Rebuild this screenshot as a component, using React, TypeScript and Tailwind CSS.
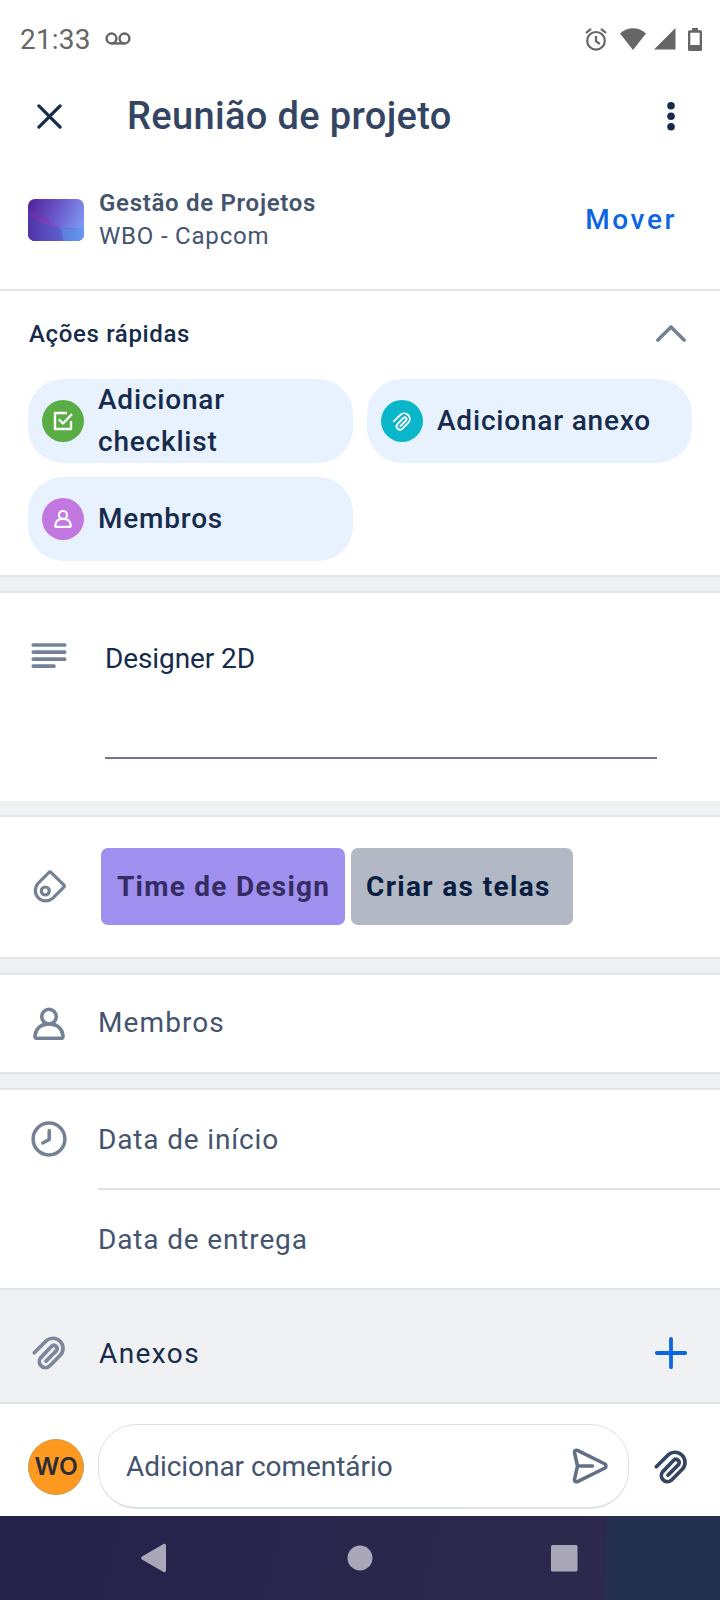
import type { ReactNode } from "react";

type IconProps = { className?: string; weight?: number };

function Paperclip({ className, weight = 3.7 }: IconProps) {
  return (
    <svg viewBox="0 0 36 36" fill="none" stroke="currentColor" strokeWidth={weight} strokeLinecap="round" strokeLinejoin="round" className={className}>
      <path d="M3.3 18.7 15.3 6.7A10.1 10.1 0 0 1 29.5 21L18.4 32.2A6.1 6.1 0 0 1 9.8 23.6L20.9 12A3.3 3.3 0 0 1 25.5 16.6L15 27.1" />
    </svg>
  );
}

function Person({ className, weight = 3.6 }: IconProps) {
  return (
    <svg viewBox="0 0 36 36" fill="none" stroke="currentColor" strokeWidth={weight} strokeLinecap="round" strokeLinejoin="round" className={className}>
      <circle cx="18" cy="10.6" r="7.3" />
      <path d="M4 29.5C5 22.2 10.5 17.9 18 17.9S31 22.2 32 29.5Q32.2 32.3 30.5 32.3H5.5Q3.8 32.3 4 29.5Z" />
    </svg>
  );
}

function CheckSquare({ className }: IconProps) {
  return (
    <svg viewBox="0 0 22 22" fill="none" stroke="currentColor" strokeWidth="2.4" strokeLinejoin="round" className={className}>
      <path d="M15 3H3V19H19V11" />
      <path d="M6.8 9.3 11 13.5 20 4.2" />
    </svg>
  );
}

function Band() {
  return <div className="h-[18px] shrink-0 border-y-2 border-[#e4e5e7] bg-[#eff0f2]" />;
}

function Chip({ color, icon, children }: { color: string; icon: ReactNode; children: ReactNode }) {
  return (
    <div className="flex h-[84px] w-[325px] items-center rounded-[35px] bg-[#e8f2fe] pl-[14px]">
      <div className={`flex size-[42px] shrink-0 items-center justify-center rounded-full text-white ${color}`}>{icon}</div>
      <span className="ml-[14px] pb-[1px] text-[28px] leading-[41.5px] font-medium tracking-[0.8px] text-[#172b4d]">{children}</span>
    </div>
  );
}

function Row({ icon, children }: { icon?: ReactNode; children: ReactNode }) {
  return (
    <div className="flex h-full items-center pl-[28px]">
      <div className="flex w-[70px] text-[#758195]">{icon}</div>
      {children}
    </div>
  );
}

export default function App() {
  return (
    <div className="flex h-[1600px] w-[720px] flex-col overflow-hidden bg-white font-['Roboto',sans-serif] whitespace-nowrap text-[#44546f]">
      <header className="flex h-[78px] shrink-0 items-center pr-[18px] pl-[20px] text-[#666666]">
        <span className="pt-[2px] text-[28px] leading-none tracking-[0.2px]">21:33</span>
        <svg viewBox="0 0 28 14" className="mb-[1px] ml-[14px] h-[13px] w-[26px]" fill="none" stroke="currentColor" strokeWidth="2.6">
          <circle cx="7" cy="7" r="5.3" />
          <circle cx="21" cy="7" r="5.3" />
          <path d="M7 12.3H21" />
        </svg>
        <div className="ml-auto flex items-center">
          <svg viewBox="0 0 22 23" className="h-[23px] w-[22px]" fill="none" stroke="currentColor" strokeWidth="2.2">
            <circle cx="11" cy="12.8" r="8.8" />
            <path d="M1 5 6 .9M21 5 16 .9M11 8V13.2L14.8 16" />
          </svg>
          <svg viewBox="0 0 26 22" className="ml-[13px] h-[22px] w-[26px]" fill="currentColor">
            <path d="M0 5.5C7.5-1.6 18.5-1.6 26 5.5L13 22Z" />
          </svg>
          <svg viewBox="0 0 22 22" className="ml-[8px] h-[22px] w-[22px]" fill="currentColor">
            <path d="M21.5 0V21.5H0Z" />
          </svg>
          <svg viewBox="0 0 14 23" className="ml-[12px] h-[23px] w-[14px]" fill="currentColor">
            <path fillRule="evenodd" d="M4 0H10V2.3H12.5Q14 2.3 14 3.8V21.5Q14 23 12.5 23H1.5Q0 23 0 21.5V3.8Q0 2.3 1.5 2.3H4ZM2.3 4.800V17H11.7V4.8Z" />
          </svg>
        </div>
      </header>

      <div className="flex h-[76px] shrink-0 items-center pr-[37px] pl-[37px]">
        <svg viewBox="0 0 26 26" className="size-[25px] text-[#172b4d]" fill="none" stroke="currentColor" strokeWidth="3.4" strokeLinecap="round">
          <path d="M2 2 24 24M24 2 2 24" />
        </svg>
        <h1 className="ml-[65px] text-[38px] leading-none font-medium tracking-[0.35px] text-[#344563]">Reunião de projeto</h1>
        <svg viewBox="0 0 24 30" className="ml-auto h-[30px] w-[24px] text-[#172b4d]" fill="currentColor">
          <circle cx="12" cy="4.7" r="3.8" />
          <circle cx="12" cy="15.2" r="3.8" />
          <circle cx="12" cy="25.7" r="3.8" />
        </svg>
      </div>

      <div className="flex h-[137px] shrink-0 items-center border-b-2 border-[#e4e4e6] pr-[43px] pb-[4px] pl-[28px]">
        <svg viewBox="0 0 56 42" className="h-[42px] w-[56px] rounded-[7px]">
          <defs>
            <linearGradient id="thumb" x1="0" y1="0.2" x2="1" y2="0.5">
              <stop offset="0" stopColor="#54259c" />
              <stop offset="0.5" stopColor="#6a58c8" />
              <stop offset="1" stopColor="#8095ee" />
            </linearGradient>
            <linearGradient id="thumbStreak" x1="0" y1="0" x2="1" y2="0.4">
              <stop offset="0" stopColor="#5c2ca4" />
              <stop offset="0.4" stopColor="#7a3fbc" />
              <stop offset="1" stopColor="#7678e0" />
            </linearGradient>
            <linearGradient id="thumbBase" x1="0" y1="0" x2="1" y2="0">
              <stop offset="0" stopColor="#4f34a8" />
              <stop offset="0.6" stopColor="#6060cc" />
              <stop offset="1" stopColor="#6a98ee" />
            </linearGradient>
            <linearGradient id="thumbCorner" x1="0" y1="0" x2="1" y2="0">
              <stop offset="0" stopColor="#5a78d8" />
              <stop offset="1" stopColor="#649cf0" />
            </linearGradient>
          </defs>
          <rect width="56" height="42" fill="url(#thumb)" />
          <path d="M0 12Q18 16 32 29H56V42H0Z" fill="url(#thumbStreak)" />
          <path d="M0 16Q15 26 33 29Q45 31 56 28V42H0Z" fill="url(#thumbBase)" />
          <path d="M32 29Q45 31 56 28V42H35Q35 35 32 29Z" fill="url(#thumbCorner)" />
        </svg>
        <div className="ml-[15px] flex flex-col text-[24px] leading-[33px]">
          <span className="font-semibold tracking-[0.7px]">Gestão de Projetos</span>
          <span className="tracking-[0.8px]">WBO - Capcom</span>
        </div>
        <span className="ml-auto text-[28px] font-medium tracking-[2.6px] text-[#0c66e4]">Mover</span>
      </div>

      <section className="flex h-[284px] shrink-0 flex-col px-[28px]">
        <div className="flex h-[88px] items-center justify-between pr-[6px] pb-[3px] pl-[1px]">
          <span className="text-[24px] font-medium tracking-[0.65px] text-[#172b4d]">Ações rápidas</span>
          <svg viewBox="0 0 32 18" className="h-[17px] w-[30px] text-[#758195]" fill="none" stroke="currentColor" strokeWidth="3.8" strokeLinecap="round" strokeLinejoin="round">
            <path d="M2 16 16 2 30 16" />
          </svg>
        </div>
        <div className="grid grid-cols-[325px_325px] gap-[14px]">
          <Chip color="bg-[#5aac44]" icon={<CheckSquare className="size-[22px]" />}>
            Adicionar
            <br />
            checklist
          </Chip>
          <Chip color="bg-[#0ab6ca]" icon={<Paperclip weight={3.4} className="size-[20px]" />}>Adicionar anexo</Chip>
          <Chip color="bg-[#c377e0]" icon={<Person weight={4} className="size-[20px]" />}>Membros</Chip>
        </div>
      </section>

      <Band />

      <section className="flex h-[208px] shrink-0 pl-[31px]">
        <svg viewBox="0 0 35 26" className="mt-[49px] h-[26px] w-[36px] text-[#758195]" stroke="currentColor" strokeWidth="3.7" strokeLinecap="round">
          <path d="M1.8 3H33.2M1.8 10.1H33.2M1.8 17.1H33.2M1.8 24.1H22.5" />
        </svg>
        <div className="ml-[38px] h-[166px] w-[552px] border-b-2 border-[#6b778c] pt-[46px] text-[28px] leading-[40px] tracking-[-0.1px] text-[#172b4d]">Designer 2D</div>
      </section>

      <div className="h-[16px] shrink-0 border-b-2 border-[#e4e5e7] bg-[#f0f1f3]" />

      <section className="flex h-[140px] shrink-0 items-center pb-[1px] pl-[33px] text-[28px] font-bold">
        <svg viewBox="0 0 33 33" className="size-[33px] text-[#758195]" fill="none" stroke="currentColor" strokeWidth="3.2" strokeLinejoin="round">
          <path d="M4.8 13.6 15.8 2.6Q17 1.4 18.2 2.6L30.8 14.8Q32 16 30.8 17.2L19.6 28.4A10.5 10.5 0 0 1 4.8 13.6Z" />
          <circle cx="12.3" cy="21" r="4" />
        </svg>
        <span className="ml-[35px] flex h-[77px] w-[244px] items-center rounded-[7px] bg-[#9f8fef] pl-[16px] tracking-[1.25px] text-[#352c63]">Time de Design</span>
        <span className="ml-[6px] flex h-[77px] w-[222px] items-center rounded-[7px] bg-[#b3b9c4] pl-[15px] tracking-[1.35px] text-[#091e42]">Criar as telas</span>
      </section>

      <Band />

      <section className="h-[97px] shrink-0 text-[28px] tracking-[1.1px]">
        <Row icon={<Person className="ml-[3px] size-[36px]" />}>
          <span className="pb-[1px]">Membros</span>
        </Row>
      </section>

      <Band />

      <section className="flex h-[198px] shrink-0 flex-col text-[28px] tracking-[0.85px]">
        <div className="h-[98px]">
          <Row
            icon={
              <svg viewBox="0 0 36 36" className="ml-[3px] size-[36px]" fill="none" stroke="currentColor" strokeWidth="3.5" strokeLinecap="round" strokeLinejoin="round">
                <circle cx="18" cy="18" r="15.9" />
                <path d="M18.2 9.5V18.5L11.8 22" />
              </svg>
            }
          >
            <span className="pt-[1px]">Data de início</span>
          </Row>
        </div>
        <div className="ml-[98px] h-[2px] shrink-0 bg-[#e2e3e6]" />
        <div className="h-[98px]">
          <Row>
            <span className="pt-[1px]">Data de entrega</span>
          </Row>
        </div>
      </section>

      <section className="flex h-[116px] shrink-0 items-center border-y-2 border-[#e1e2e5] bg-[#f0f1f3] pt-[14px] pr-[32px] pl-[31px] text-[#172b4d]">
        <Paperclip className="mb-[2px] size-[36px] text-[#7d879b]" />
        <span className="ml-[32px] pt-[1px] text-[28px] leading-none tracking-[1.4px]">Anexos</span>
        <svg viewBox="0 0 34 34" className="ml-auto size-[34px] text-[#0c66e4]" stroke="currentColor" strokeWidth="3.8" strokeLinecap="round">
          <path d="M17 2.8V31.2M2.8 17H31.2" />
        </svg>
      </section>

      <section className="flex h-[112px] shrink-0 items-center pt-[13px] pl-[28px]">
        <div className="flex size-[56px] items-center justify-center rounded-full border border-[#cf9850] bg-[#ff991f] font-['Inter',sans-serif] text-[24.5px] font-semibold tracking-[-0.2px] text-[#2b2d38]">WO</div>
        <div className="ml-[14px] flex h-[85px] w-[531px] items-center rounded-[38px] border-x border-t border-b-2 border-[#e0e1e5] pr-[20px] pl-[27px]">
          <span className="pt-[2px] text-[28px] tracking-[-0.05px]">Adicionar comentário</span>
          <svg viewBox="0 0 36 36" className="ml-auto size-[36px] text-[#626f86]" fill="none" stroke="currentColor" strokeWidth="3.5" strokeLinecap="round" strokeLinejoin="round">
            <path d="M2.5 4.5C2.3 2.7 3.8 1.8 5.5 2.4L33 16C34.3 17 34.3 19 33 20L5.5 33.6C3.8 34.2 2.3 33.3 2.5 31.5L5.5 18ZM5.5 18H20.5" />
          </svg>
        </div>
        <Paperclip className="mb-[1px] ml-[24px] size-[36px] text-[#344563]" />
      </section>

      <nav className="flex h-[84px] shrink-0 items-center bg-[linear-gradient(105deg,#24224a_0%,#2a274d_55%,#2f294c_100%)]">
        <svg viewBox="0 0 720 84" className="h-[84px] w-[720px]">
          <path d="M606 0H720V84H604Z" fill="#23304f" />
          <path d="M142 40.5 163.5 28Q166 27 166 29.5V54.5Q166 57 163.5 56L142 43.5Q140 42 142 40.5Z" fill="#aaa7b8" />
          <circle cx="360" cy="42" r="12.5" fill="#aaa7b8" />
          <rect x="551" y="29" width="26.5" height="26.5" rx="1.5" fill="#aaa7b8" />
        </svg>
      </nav>
    </div>
  );
}
